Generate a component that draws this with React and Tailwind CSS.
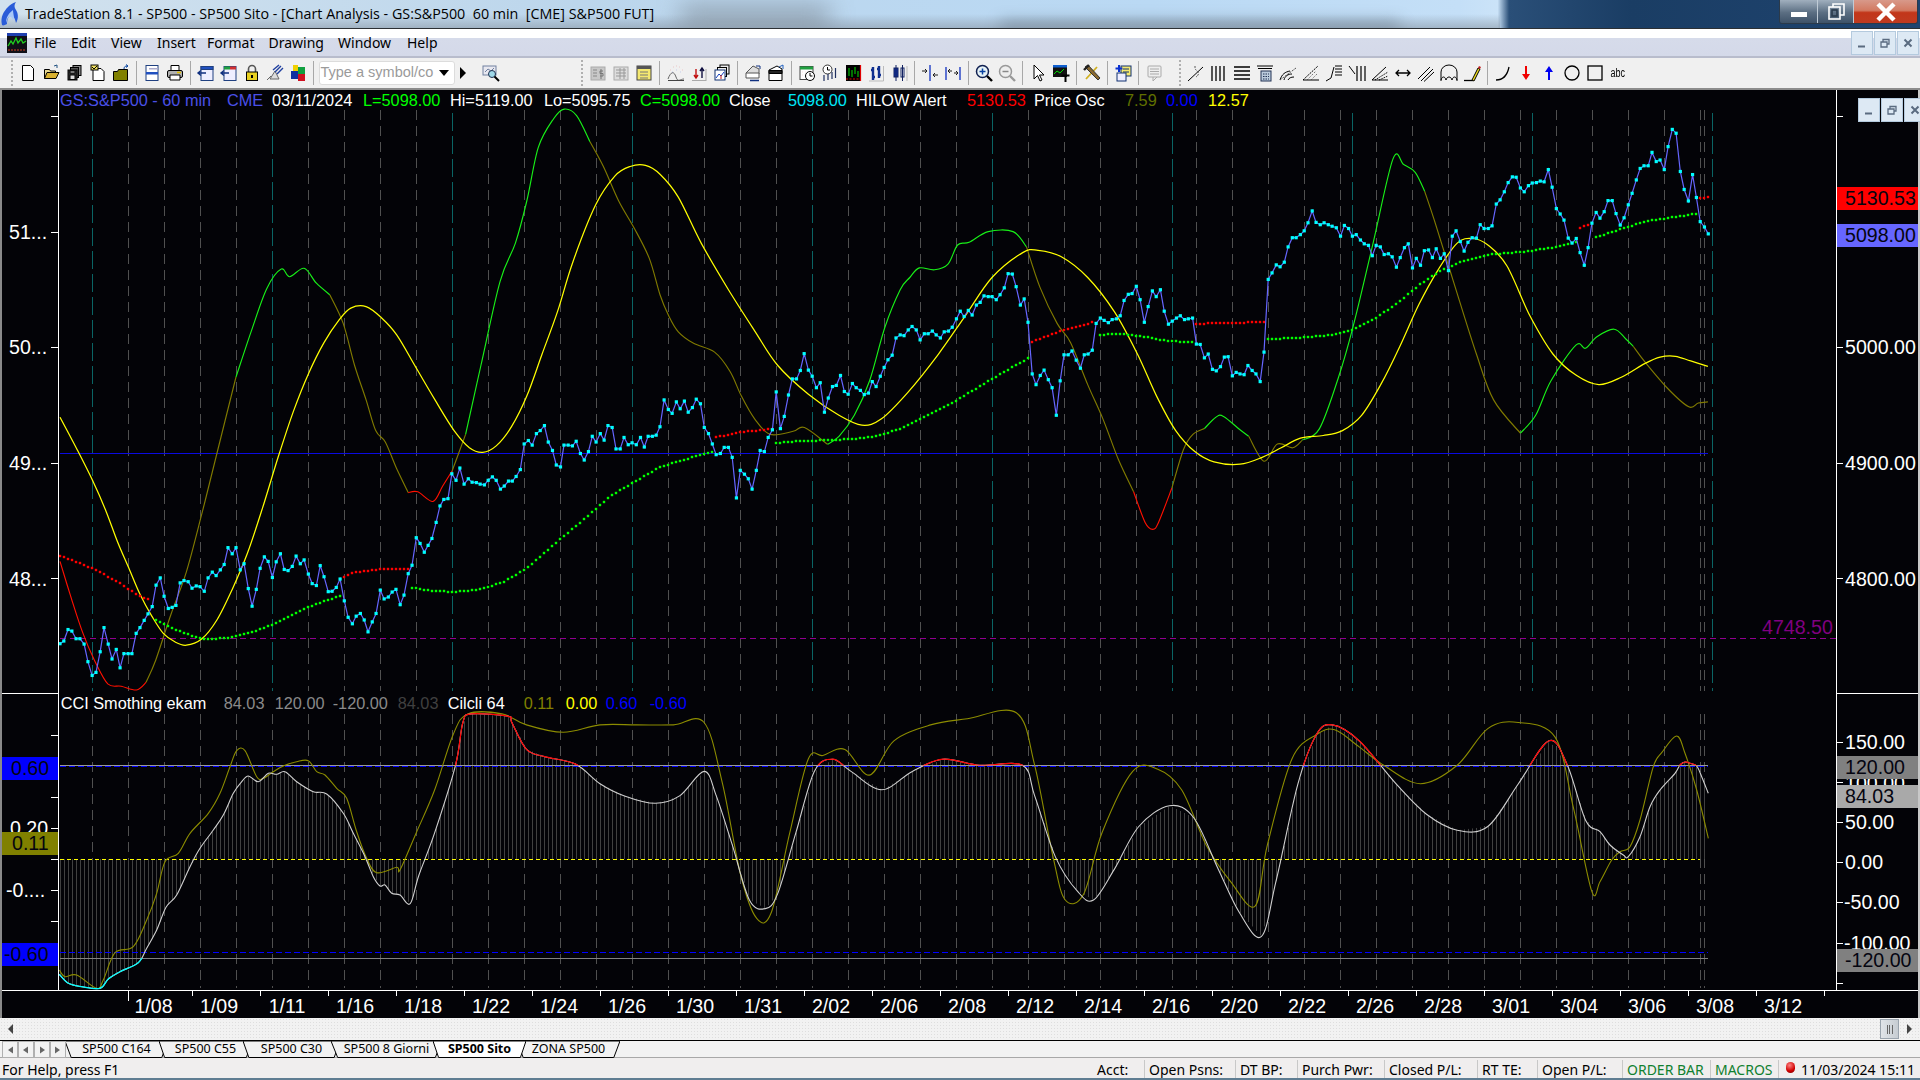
import React from "react";

const K = 600 / 1568;
const Z = (ox) => (pts) => pts.map(([x, y]) => [ox + x * K, 90 + y * K]);
const A = Z(60), B = Z(640), C = Z(1220);
const O = (pts) => pts.map(([x, y]) => [x * 1.2245, y * 1.2245]);
const Z7 = (pts) => pts.map(([x, y]) => [x / 3, 680 + y / 3]);
const Z8 = (pts) => pts.map(([x, y]) => [1600 + x / 3, 680 + y / 3]);

const price = [
  ...A([[0,1447],[10,1440],[21,1410],[31,1414],[42,1434],[52,1434],[63,1448],[73,1494],[84,1530],[94,1522],[105,1468],[115,1405],[126,1448],[136,1487],[147,1462],[157,1510],[167,1473],[178,1473],[188,1473],[199,1420],[209,1405],[220,1386],[230,1369],[241,1350],[251,1294],[262,1275],[272,1323],[283,1355],[293,1352],[303,1347],[314,1288],[324,1282],[335,1285],[345,1302],[356,1296],[366,1298],[377,1310],[387,1275],[398,1260],[408,1269],[419,1254],[429,1240],[439,1196],[450,1212],[460,1196],[471,1254],[481,1238],[492,1303],[502,1349],[513,1305],[523,1250],[534,1220],[544,1232],[555,1274],[565,1233],[576,1212],[586,1253],[596,1256],[607,1245],[617,1218],[628,1238],[638,1228],[649,1265],[659,1290],[670,1295],[680,1243],[690,1272],[701,1311],[711,1310],[722,1300],[732,1278],[743,1335],[753,1378],[764,1395],[774,1375],[785,1368],[795,1385],[805,1416],[816,1390],[826,1368],[837,1307],[847,1330],[858,1325],[868,1312],[878,1305],[889,1345],[899,1320],[910,1264],[920,1242],[931,1170],[941,1185],[952,1208],[962,1190],[972,1172],[983,1130],[993,1087],[1003,1070],[1014,1068],[1024,1003],[1035,1020],[1045,988],[1056,1030],[1067,1016],[1077,1025],[1088,1026],[1098,1030],[1109,1032],[1119,1020],[1130,1011],[1140,1020],[1151,1043],[1161,1035],[1172,1022],[1182,1022],[1192,1010],[1203,992],[1213,925],[1224,916],[1234,928],[1245,898],[1255,890],[1266,877],[1276,920],[1287,942],[1297,980],[1308,985],[1317,928],[1328,928],[1339,930],[1349,918],[1360,950],[1370,967],[1381,945],[1391,905],[1401,920],[1412,898],[1422,915],[1432,877],[1443,882],[1453,938],[1464,938],[1474,908],[1485,927],[1495,922],[1506,927],[1517,908],[1527,933],[1537,905],[1548,905],[1558,902],[1568,880]]),
  ...B([[63,810],[74,835],[84,845],[95,815],[105,833],[116,813],[126,842],[137,830],[147,808],[158,820],[168,882],[179,898],[189,925],[199,953],[210,950],[220,934],[231,934],[241,960],[252,1066],[262,994],[273,1004],[283,1016],[293,1043],[304,994],[314,942],[325,945],[335,908],[346,888],[356,789],[367,885],[377,853],[388,797],[398,755],[409,755],[419,733],[429,689],[440,732],[450,748],[461,778],[471,765],[482,842],[492,805],[503,775],[513,772],[524,746],[534,788],[544,795],[555,767],[565,778],[576,785],[586,796],[597,792],[607,762],[617,775],[628,748],[638,725],[648,705],[659,693],[669,648],[680,640],[690,642],[701,627],[711,618],[722,627],[732,653],[743,637],[753,637],[764,630],[774,640],[785,648],[795,632],[806,630],[816,620],[827,598],[837,578],[847,592],[858,576],[868,588],[879,562],[889,555],[899,538],[910,540],[920,540],[931,548],[941,535],[952,517],[962,480],[973,481],[983,514],[994,562],[1004,546],[1014,607],[1025,742],[1035,770],[1046,746],[1056,732],[1067,757],[1077,778],[1088,850],[1098,760],[1108,692],[1119,692],[1129,682],[1140,706],[1151,727],[1161,692],[1171,690],[1182,680],[1192,610],[1203,596],[1213,602],[1224,608],[1234,600],[1245,598],[1255,590],[1265,550],[1276,534],[1286,532],[1297,513],[1307,548],[1318,607],[1328,566],[1339,525],[1349,540],[1360,522],[1370,578],[1381,612],[1391,604],[1402,596],[1412,590],[1423,600],[1433,598],[1444,596],[1454,664],[1464,665],[1475,700],[1485,690],[1496,730],[1506,734],[1517,723],[1527,698],[1537,697],[1548,747],[1558,738],[1568,742]]),
  ...C([[63,744],[73,720],[84,733],[94,742],[105,762],[115,685],[126,495],[136,478],[147,457],[157,462],[168,450],[178,410],[189,386],[199,386],[210,378],[220,368],[230,347],[241,316],[251,346],[262,352],[272,347],[283,352],[293,356],[304,360],[315,382],[325,354],[336,362],[346,382],[356,378],[367,392],[377,402],[388,406],[398,433],[408,406],[419,410],[429,430],[440,428],[450,436],[461,463],[471,438],[482,412],[492,402],[503,465],[513,440],[524,458],[534,420],[545,418],[555,438],[565,415],[576,440],[586,428],[597,472],[607,382],[617,368],[628,396],[638,421],[648,398],[659,386],[670,387],[680,352],[690,362],[701,362],[711,355],[722,298],[732,287],[743,266],[753,242],[764,227],[774,228],[785,256],[795,266],[806,250],[816,243],[827,242],[837,238],[847,240],[858,208],[868,254],[879,310],[889,324],[899,340],[910,387],[920,400],[931,388],[941,425],[952,458],[962,412],[972,348],[983,320],[993,335],[1004,318],[1014,289],[1025,289],[1035,323],[1046,353],[1056,334],[1067,300],[1077,270],[1088,235],[1098,205],[1108,198],[1119,198],[1129,163],[1140,187],[1150,183],[1161,208],[1171,148],[1182,103],[1192,113],[1203,213],[1213,260],[1224,290],[1235,221],[1245,281],[1255,344],[1266,358],[1276,376]]),
];

const red = "#ff0000", green = "#00ff00";
const dotted = [
  [red, A([[0,1218],[50,1235],[100,1258],[150,1285],[200,1318],[240,1336]])],
  [green, A([[245,1382],[290,1405],[340,1425],[380,1435],[440,1432],[500,1418],[560,1395],[640,1355],[735,1320]])],
  [red, A([[738,1276],[770,1260],[820,1254],[860,1251],[910,1253]])],
  [green, [...A([[918,1301],[970,1308],[1030,1312],[1100,1305],[1160,1285],[1220,1250],[1300,1180],[1360,1130],[1440,1060],[1500,1025],[1568,985]]), ...B([[130,962],[190,945]])]],
  [red, B([[195,908],[260,895],[345,885]])],
  [green, B([[355,922],[430,917],[500,915],[560,912],[620,905],[680,885],[730,860],[820,815],[920,755],[1016,700]])],
  [red, B([[1020,660],[1100,630],[1190,605]])],
  [green, B([[1200,640],[1260,637],[1320,645],[1380,656],[1450,660]])],
  [red, [...B([[1450,612],[1520,608]]), ...C([[60,608],[120,606]])]],
  [green, C([[125,651],[200,648],[290,640],[350,625],[400,600],[460,560],[520,510],[580,470],[640,445],[700,430],[800,422],[870,412],[935,397]])],
  [red, C([[940,360],[970,350]])],
  [green, C([[975,388],[1050,362],[1120,342],[1200,330],[1250,323]])],
  [red, C([[1253,283],[1278,279]])],
];

const yellow = [
  ...A([[0,855],[45,940],[85,1020],[120,1100],[150,1180],[180,1250],[210,1320],[240,1375],[270,1420],[300,1442],[330,1451],[370,1435],[410,1385],[450,1305],[490,1210],[530,1090],[570,960],[610,840],[650,740],[690,660],[730,600],[760,570],[800,566],[840,595],[880,640],[930,725],[980,810],[1030,890],[1070,935],[1105,947],[1140,930],[1180,880],[1220,800],[1260,690],[1300,580],[1340,450],[1400,300],[1450,225],[1490,200],[1530,197],[1568,220]]),
  ...B([[100,280],[160,400],[230,520],[300,630],[360,720],[440,795],[520,850],[580,876],[630,860],[700,790],[780,690],[850,590],[920,490],[1000,425],[1040,419],[1100,435],[1170,490],[1240,580],[1300,690],[1350,800],[1400,890],[1450,945],[1500,972],[1568,978]]),
  ...C([[110,960],[160,935],[210,910],[270,903],[320,890],[370,850],[420,770],[470,670],[520,560],[570,470],[620,400],[660,388],[700,405],[750,460],[810,590],[870,690],[930,745],[990,770],[1050,750],[1110,715],[1150,698],[1190,696],[1230,708],[1275,722]]),
];

const OL = "#807a00", GR = "#18f018", RD = "#ff1000";
const osc = [
  [RD, A([[0,1232],[30,1330],[60,1420],[90,1490],[125,1552],[160,1558],[200,1568],[225,1548]])],
  [OL, A([[225,1548],[250,1490],[290,1370],[330,1260],[370,1110],[410,950],[460,750]])],
  [GR, A([[460,750],[500,630],[540,520],[578,468],[600,488],[638,466],[670,505],[705,535]])],
  [OL, A([[705,535],[740,610],[770,720],[800,810],[825,890],[850,920],[880,990],[910,1052]])],
  [RD, A([[910,1052],[935,1050],[975,1075],[1000,1035],[1025,995]])],
  [OL, A([[1025,995],[1060,900]])],
  [GR, A([[1060,900],[1100,720],[1150,500],[1190,400],[1220,290],[1250,150],[1290,75],[1318,50],[1350,67],[1385,135]])],
  [OL, [...A([[1385,135],[1420,200],[1460,290],[1500,360],[1540,440],[1568,535]]), ...B([[75,590],[100,632],[140,662],[195,685],[235,735],[265,800],[300,860],[340,900],[400,892],[430,882],[490,926]])]],
  [GR, B([[490,926],[520,905],[560,850],[600,760],[640,620],[680,522],[705,490],[730,465],[770,470],[805,455],[830,405],[860,398],[910,370],[975,370],[1010,410]])],
  [OL, B([[1010,410],[1045,515],[1090,610],[1125,660],[1170,770],[1210,860],[1250,965],[1290,1050]])],
  [RD, B([[1290,1050],[1320,1130],[1340,1148],[1355,1130],[1390,1040]])],
  [OL, B([[1390,1040],[1420,940],[1445,900],[1475,885]])],
  [GR, B([[1475,885],[1505,855],[1525,853],[1568,888]]).concat(C([[75,905]]))],
  [OL, C([[75,905],[115,970],[150,925],[190,935],[215,915]])],
  [GR, C([[215,915],[260,885],[310,750],[350,610],[400,400],[452,180],[480,195],[510,215],[535,265]])],
  [OL, C([[535,265],[560,340],[610,500],[670,690],[715,810],[785,897]])],
  [GR, C([[785,897],[825,850],[865,760],[930,667],[955,675],[985,645],[1030,625],[1060,650],[1080,670]])],
  [OL, C([[1080,670],[1110,710],[1170,780],[1225,828],[1250,818],[1275,815]])],
];

const white = [
  ...Z7([[178,883],[205,910],[245,920],[300,925],[325,897],[360,875],[415,848],[440,805],[470,750],[498,682],[530,645],[570,560],[600,505],[640,450],[670,405],[700,340],[725,305],[745,288],[775,305],[805,280],[830,283],[855,275],[890,305],[940,335],[980,342],[1030,400],[1060,460],[1095,530],[1120,590],[1140,618],[1155,615],[1175,640],[1200,645]]),
  ...O([[335,738],[342,715],[355,680],[372,625],[378,590],[385,583],[415,585],[418,590],[430,612],[445,618],[470,624],[490,640],[510,650],[535,656],[555,650],[575,630],[585,650],[598,690],[612,735],[625,742],[635,730],[650,680],[665,630],[680,620],[695,630],[720,645],[745,630],[770,620],[800,625],[835,625],[845,650],[862,700],[880,728],[893,735],[910,710],[930,675],[955,658],[975,668],[995,710],[1012,745],[1030,765],[1042,720],[1060,640],[1075,600],[1088,592],[1110,605],[1140,640],[1165,665],[1190,678],[1215,675],[1240,640],[1265,605],[1280,625],[1295,670]]),
  ...Z8([[0,455],[30,495],[70,525],[85,530],[120,470],[150,380],[180,330],[225,280],[240,255],[255,246],[270,250],[290,258],[305,290],[325,340]]),
];
const olive = [
  ...Z7([[178,870],[195,890],[230,885],[290,925],[310,900],[345,818],[400,800],[440,720],[470,640],[495,545],[535,520],[570,460],[625,400],[660,340],[690,260],[710,212],[735,212],[770,290],[790,295],[820,275],[850,258],[890,245],[925,242],[950,275],[975,285],[1010,325],[1040,355],[1070,455],[1100,535],[1130,578],[1190,562],[1200,570]]),
  ...O([[340,680],[355,645],[370,600],[382,583],[410,583],[430,592],[460,598],[490,592],[520,592],[550,592],[575,590],[590,640],[605,715],[618,750],[630,745],[645,680],[660,620],[672,617],[690,612],[710,633],[730,605],[760,592],[790,587],[830,582],[845,625],[860,700],[870,735],[885,730],[900,680],[925,630],[945,628],[965,645],[985,690],[1005,720],[1025,740],[1035,690],[1055,620],[1075,600],[1090,596],[1110,610],[1130,625],[1160,640],[1190,625],[1215,595],[1240,590],[1270,602],[1285,660],[1300,728]]),
  ...Z8([[0,605],[35,540],[60,515],[90,500],[120,420],[160,260],[185,218],[230,168],[255,220],[290,330],[325,475]]),
];

const poly = (p) => p.map(([x, y]) => `${x.toFixed(1)},${y.toFixed(1)}`).join(" ");
const smooth = (p) => {
  let d = `M${p[0][0].toFixed(1)} ${p[0][1].toFixed(1)}`;
  for (let i = 0; i < p.length - 1; i++) {
    const a = p[Math.max(i - 1, 0)], b = p[i], c = p[i + 1], e = p[Math.min(i + 2, p.length - 1)];
    d += `C${(b[0] + (c[0] - a[0]) / 6).toFixed(1)} ${(b[1] + (c[1] - a[1]) / 6).toFixed(1)} ${(c[0] - (e[0] - b[0]) / 6).toFixed(1)} ${(c[1] - (e[1] - b[1]) / 6).toFixed(1)} ${c[0].toFixed(1)} ${c[1].toFixed(1)}`;
  }
  return d;
};
const yAt = (p, x) => {
  for (let i = 0; i < p.length - 1; i++) {
    if (x >= p[i][0] && x <= p[i + 1][0]) {
      const t = (x - p[i][0]) / (p[i + 1][0] - p[i][0] || 1);
      return p[i][1] + t * (p[i + 1][1] - p[i][1]);
    }
  }
  return null;
};
const dotsOf = (p) => {
  const out = [];
  for (let x = Math.ceil(p[0][0] / 4) * 4; x <= p[p.length - 1][0]; x += 4) {
    const y = yAt(p, x);
    if (y != null) out.push([x, y]);
  }
  return out;
};
const crisp = (x) => Math.floor(x) + 0.5;

const grayX = [128.9,164.5,200.5,236.4,308.4,344.3,380.7,416.7,488.6,524.6,560.6,596.5,668.3,704.3,740.6,776.2,848.6,884.5,920.5,956.5,1028.4,1064.5,1100.4,1136.7,1196.8,1232.5,1268.5,1304.6,1340.5,1376.5,1412.5,1448.5,1484.4,1520.4,1556.8,1592.4,1628.3,1664.3,1700.3,1704];
const tealX = [92.5,272.4,452.3,632.5,812.2,992.5,1172.3,1352.8,1532.3,1712.5];
const subTealGray = [92.5,272.4,452.3,632.5,812.2,992.5,1172.3];
const dateTicks = Array.from({ length: 25 }, (_, i) => 192 + 68 * i);
const dates = ["1/09","1/11","1/16","1/18","1/22","1/24","1/26","1/30","1/31","2/02","2/06","2/08","2/12","2/14","2/16","2/20","2/22","2/26","2/28","3/01","3/04","3/06","3/08","3/12"];

function Chart() {
  const bars = [];
  for (let x = 60; x <= 1706; x += 4) {
    const y = yAt(white, x);
    if (y != null) bars.push(<line key={x} x1={x + 0.5} x2={x + 0.5} y1={859} y2={y} stroke="#404040" strokeWidth="1" />);
  }
  const whitePath = smooth(white);
  return (
    <svg className="absolute left-0 top-0 font-['Liberation_Sans',sans-serif]" width="1920" height="928" viewBox="0 90 1920 928">
      <defs>
        <clipPath id="above"><rect x="0" y="700" width="1920" height="65.5" /></clipPath>
        <clipPath id="below"><rect x="0" y="958" width="1920" height="32" /></clipPath>
      </defs>
      {grayX.map((x) => (
        <g key={x}>
          <line x1={crisp(x)} x2={crisp(x)} y1="110" y2="691" stroke="#505050" strokeWidth="1" strokeDasharray="10 6" />
          <line x1={crisp(x)} x2={crisp(x)} y1="714" y2="988" stroke="#505050" strokeWidth="1" strokeDasharray="10 6" />
        </g>
      ))}
      {subTealGray.map((x) => (
        <line key={x} x1={crisp(x)} x2={crisp(x)} y1="714" y2="988" stroke="#505050" strokeWidth="1" strokeDasharray="10 6" />
      ))}
      {tealX.map((x) => (
        <line key={x} x1={crisp(x)} x2={crisp(x)} y1="113" y2="691" stroke="#0a6464" strokeWidth="1" strokeDasharray="18 5" />
      ))}
      <line x1="60" x2="1708" y1="453.5" y2="453.5" stroke="#0a0ae0" strokeWidth="1" />
      <line x1="60" x2="1836" y1="638.5" y2="638.5" stroke="#900090" strokeWidth="1" strokeDasharray="6 4" />
      {osc.map(([c, p], i) => (
        <path key={i} d={smooth(p)} fill="none" stroke={c} strokeWidth="1.15" />
      ))}
      <path d={smooth(yellow)} fill="none" stroke="#ffff00" strokeWidth="1.25" />
      {dotted.map(([c, p], i) =>
        dotsOf(p).map(([x, y]) => <rect key={i + "-" + x} x={x - 1.2} y={Math.round(y) - 1.2} width="2.4" height="2.4" fill={c} />)
      )}
      <polyline points={poly(price)} fill="none" stroke="#6666ff" strokeWidth="1.2" />
      {price.map(([x, y], i) => (
        <rect key={i} x={x - 1.6} y={y - 1.6} width="3.2" height="3.2" fill="#00ffff" />
      ))}

      {bars}
      <line x1="60" x2="1708" y1="765.5" y2="765.5" stroke="#9a9a9a" strokeWidth="1" />
      <line x1="60" x2="1708" y1="766.5" y2="766.5" stroke="#0000ff" strokeWidth="1" strokeDasharray="6 3" />
      <line x1="60" x2="1700" y1="859.5" y2="859.5" stroke="#ffff00" strokeWidth="1" strokeDasharray="4 3" />
      <line x1="60" x2="1708" y1="952.5" y2="952.5" stroke="#0000ff" strokeWidth="1" strokeDasharray="6 3" />
      <line x1="60" x2="1708" y1="958.5" y2="958.5" stroke="#808080" strokeWidth="1" />
      <path d={smooth(olive)} fill="none" stroke="#8c8c00" strokeWidth="1.1" />
      <path d={whitePath} fill="none" stroke="#d0d0d0" strokeWidth="1.1" />
      <path d={whitePath} fill="none" stroke="#ff0000" strokeWidth="1.2" clipPath="url(#above)" />
      <path d={whitePath} fill="none" stroke="#00ffff" strokeWidth="1.2" clipPath="url(#below)" />

      {/* axes */}
      <line x1="58.5" x2="58.5" y1="90" y2="990" stroke="#fff" strokeWidth="1" />
      <line x1="1836.5" x2="1836.5" y1="90" y2="990" stroke="#fff" strokeWidth="1" />
      <line x1="2" x2="58" y1="693.5" y2="693.5" stroke="#fff" strokeWidth="1" />
      <line x1="1836" x2="1918" y1="693.5" y2="693.5" stroke="#fff" strokeWidth="1" />
      <line x1="2" x2="1918" y1="990.5" y2="990.5" stroke="#fff" strokeWidth="1" />
      {[116,232,347,463,578,735,766,797,828,859,890,921,953].map((y) => (
        <line key={y} x1="51" x2="58" y1={y + 0.5} y2={y + 0.5} stroke="#fff" strokeWidth="1" />
      ))}
      {[116,232,347,463,578,742,782,822,862,902,943,983].map((y) => (
        <line key={y} x1="1837" x2="1843" y1={y + 0.5} y2={y + 0.5} stroke="#fff" strokeWidth="1" />
      ))}
      <line x1="128.5" x2="128.5" y1="991" y2="1001" stroke="#fff" strokeWidth="1" />
      {dateTicks.map((x) => (
        <line key={x} x1={x + 0.5} x2={x + 0.5} y1="991" y2="996" stroke="#fff" strokeWidth="1" />
      ))}
      <g fill="#ffffff" fontSize="19.6">
        {[["51...",239],["50...",354],["49...",470],["48...",586],["0.20",835],["-0....",897]].map(([t, y]) => (
          <text key={t} x={t === "0.20" ? 10 : t === "-0...." ? 6 : 9} y={y}>{t}</text>
        ))}
        {[["5000.00",354],["4900.00",470],["4800.00",586],["150.00",749],["100.00",790],["50.00",829],["0.00",869],["-50.00",909],["-100.00",950]].map(([t, y]) => (
          <text key={t} x={t[0] === "-" ? 1844 : 1845} y={y}>{t}</text>
        ))}
        <text x="1762" y="634" fill="#800080">4748.50</text>
      </g>
    </svg>
  );
}

const Badge = ({ cls, children }) => (
  <div className={"absolute flex items-center h-[23px] text-[19.6px] text-[#050510] " + cls}>{children}</div>
);

function Legends() {
  return (
    <>
      <div className="absolute left-[60px] top-[1px] h-[19px] flex items-center text-[16.3px] whitespace-nowrap">
        <span className="w-[167px] text-[#4a50e8]">GS:S&amp;P500 - 60 min</span>
        <span className="w-[45px] text-[#4a50e8]">CME</span>
        <span className="w-[91px] text-white">03/11/2024</span>
        <span className="w-[87px] text-[#00ff00]">L=5098.00</span>
        <span className="w-[94px] text-white">Hi=5119.00</span>
        <span className="w-[96px] text-white">Lo=5095.75</span>
        <span className="w-[89px] text-[#00ff00]">C=5098.00</span>
        <span className="w-[59px] text-white">Close</span>
        <span className="w-[68px] text-[#00e8f8]">5098.00</span>
        <span className="w-[111px] text-white">HILOW Alert</span>
        <span className="w-[67px] text-[#ff0000]">5130.53</span>
        <span className="w-[91px] text-white">Price Osc</span>
        <span className="w-[41px] text-[#607000]">7.59</span>
        <span className="w-[42px] text-[#0000ff]">0.00</span>
        <span className="text-[#ffff00]">12.57</span>
      </div>
      <div className="absolute left-[60.7px] top-[603.5px] h-[19px] flex items-center text-[16.3px] whitespace-nowrap">
        <span className="w-[163px] text-white">CCI Smothing ekam</span>
        <span className="w-[51px] text-[#8a8a8a]">84.03</span>
        <span className="w-[58px] text-[#8a8a8a]">120.00</span>
        <span className="w-[65px] text-[#8a8a8a]">-120.00</span>
        <span className="w-[50px] text-[#404040]">84.03</span>
        <span className="w-[76px] text-white">Cilcli 64</span>
        <span className="w-[42px] text-[#808000]">0.11</span>
        <span className="w-[40px] text-[#ffff00]">0.00</span>
        <span className="w-[44px] text-[#0000ff]">0.60</span>
        <span className="text-[#0000ff]">-0.60</span>
      </div>
    </>
  );
}

/* ---------- toolbar icons ---------- */
const G = ({ children }) => (
  <svg width="20" height="20" viewBox="0 0 20 20" className="block" fill="none" stroke="#000" strokeWidth="1">{children}</svg>
);
const ic = {
  newDoc: <G><path d="M4.5 2.5h8l3 3v12h-11z" fill="#fff" /></G>,
  open: <G><path d="M2.5 15.5v-9h5l1 1.5h5v2" fill="#e8d890" /><path d="M2.5 15.5l2.5-6h12l-3 6z" fill="#d8b030" /><path d="M12 3l3-1v3" stroke="#205080" /></G>,
  saveAll: <G><rect x="8" y="2.5" width="8" height="10" fill="#888" /><rect x="5.5" y="4.5" width="8" height="10" fill="#555" /><rect x="3" y="7" width="9" height="10" fill="#333" /><rect x="5" y="12" width="5" height="4.5" fill="#ddd" /><rect x="5" y="8" width="5" height="2" fill="#eee" /></G>,
  docCheck: <G><path d="M5 5.5h8l3 3v9H5z" fill="#fff" /><rect x="3" y="2" width="7" height="5" fill="#f0e060" /><path d="M4 4l2 2 3-3" /></G>,
  oliveFolder: <G><path d="M2.5 8.5h4l1-2h9v11h-14z" fill="#808000" /><path d="M13 6c0-2 1-3 3-3M15 1.5L17 3l-2 1.5" stroke="#0040a0" /></G>,
  blueDoc: <G><rect x="4" y="2.5" width="12" height="15" fill="#fff" stroke="#204080" /><rect x="4" y="9" width="12" height="2.5" fill="#2050c0" stroke="none" /><rect x="7" y="5" width="9" height="1.5" fill="#aac" stroke="none" /></G>,
  printer: <G><path d="M6 2.5h8v5H6z" fill="#fff" /><rect x="2.5" y="7.5" width="15" height="7" rx="1.5" fill="#b0b0b0" /><path d="M5 12h10v5H5z" fill="#fff" /><path d="M12 9.5h4" stroke="#e0c000" strokeWidth="1.5" /></G>,
  winBack: <G><rect x="5" y="3.5" width="12" height="14" fill="#eef" stroke="#204080" /><rect x="5" y="3.5" width="12" height="3" fill="#2050c0" stroke="#204080" /><path d="M10 10H2M5 7.5L2 10l3 2.5" stroke="#103080" strokeWidth="1.4" /></G>,
  winBack2: <G><rect x="5" y="3.5" width="12" height="14" fill="#eef" stroke="#204080" /><rect x="5" y="3.5" width="6" height="3" fill="#20a040" stroke="none" /><rect x="11" y="3.5" width="6" height="3" fill="#d03030" stroke="none" /><path d="M10 10H2M5 7.5L2 10l3 2.5" stroke="#103080" strokeWidth="1.4" /></G>,
  lock: <G><path d="M6.5 9V6a3.5 3.5 0 0 1 7 0v3" stroke="#555" strokeWidth="1.6" /><rect x="4.5" y="9" width="11" height="8.5" fill="#e8d020" /><rect x="9" y="12" width="2" height="3" fill="#000" stroke="none" /></G>,
  sat: <G><path d="M5 16l5-8 4 8z" fill="#ddd" stroke="#666" /><path d="M10 9l6-6M8 7l6-5M12 11l6-6" stroke="#2040a0" strokeWidth="1.4" /><path d="M2 17l4-4" stroke="#666" /></G>,
  cubes: <G><rect x="3" y="8" width="7" height="8" fill="#1030a0" stroke="none" /><rect x="10" y="4" width="7" height="7" fill="#10a040" stroke="none" /><rect x="10" y="11" width="7" height="7" fill="#d01020" stroke="none" /><rect x="5" y="2" width="5" height="6" fill="#f0d000" stroke="none" /></G>,
  lens: <G><rect x="2" y="3" width="13" height="9" fill="#e8e8f0" stroke="#7080a0" /><path d="M4 9l3-3 3 2 3-3" stroke="#7080a0" /><circle cx="11" cy="11" r="3.5" fill="#9fd8e8" stroke="#203050" /><path d="M13.5 13.5L18 18" strokeWidth="2" /></G>,
  gDollar: <G><rect x="3" y="4" width="14" height="13" fill="#c8c8c8" stroke="#aaa" /><path d="M5 7h4M5 10h4M5 13h4" stroke="#888" /><path d="M13 6v10M15 8h-3v2.500h3V13h-3" stroke="#777" /></G>,
  gCalc: <G><rect x="3" y="4" width="14" height="13" fill="#ddd" stroke="#aaa" /><path d="M5 7h10M5 10h10M5 13h10M9 5v11M13 5v11" stroke="#999" /></G>,
  gSheet: <G><rect x="3" y="3" width="14" height="14" fill="#f4e870" stroke="#444" /><rect x="3" y="3" width="14" height="3" fill="#555" stroke="none" /><path d="M6 9h8M6 12h8M6 15h8" stroke="#777" /></G>,
  wave: <G><path d="M2 16c3-8 6-8 8-2s4 2 8 2" stroke="#666" /><path d="M2 17.500h16" stroke="#444" /><path d="M4 7h.1M7 4h.1M10 3h.1M13 4h.1M16 7h.1" stroke="#d02020" strokeWidth="2" /><path d="M6 9h.1M10 7h.1M14 9h.1" stroke="#2040d0" strokeWidth="2" /></G>,
  upDown: <G><path d="M7 6v9M5 12l2 3 2-3" stroke="#c01010" strokeWidth="1.4" /><path d="M13 15V5M11 8l2-3 2 3" stroke="#101040" strokeWidth="1.4" /><path d="M3 17.500h14M17 6v12" stroke="#aaa" /></G>,
  stack: <G><rect x="8" y="2" width="9" height="9" fill="#eee" /><rect x="5.500" y="4.500" width="9" height="9" fill="#eee" /><rect x="3" y="7" width="10" height="10" fill="#fff" stroke="#103070" /><path d="M4 15l3-4 2 2 3-4" stroke="#1040c0" /><path d="M9 16v-4" stroke="#c01010" /></G>,
  docChart: <G><path d="M3 10l7-7 6 3v5" fill="#ddd" stroke="#555" /><path d="M3 10h13v5H3z" fill="#fff" stroke="#555" /><path d="M7 17.500h9" stroke="#103080" strokeWidth="1.500" /><path d="M13 3h4v3" stroke="#103080" /></G>,
  docFolder: <G><path d="M3 17.500V7l8-4 5 3v11.500z" fill="#fff" /><path d="M3 7.500h13v3H3z" fill="#222" /><path d="M13 4l4-2v4" stroke="#2060c0" /></G>,
  calClock: <G><rect x="3" y="3.500" width="13" height="13" fill="#fff" stroke="#444" /><rect x="3" y="3.500" width="13" height="3" fill="#20a040" stroke="none" /><path d="M5 9h.1M8 9h.1M5 12h.1" stroke="#d02020" strokeWidth="1.500" /><circle cx="13" cy="13" r="4.500" fill="#fff" /><path d="M13 10v3h2.500" /></G>,
  clockBars: <G><circle cx="7.500" cy="6.500" r="4.500" fill="#fff" stroke="#333" /><path d="M7.500 4v3H10" /><path d="M4 12v6M8 11v6M12 9v7M15.500 5v10" stroke="#203060" strokeWidth="1.200" /></G>,
  blackChart: <G><rect x="3" y="2" width="14.500" height="16" fill="#000" stroke="none" /><path d="M6 5v8M9 7v7M12 4v7M15 8v6" stroke="#00e000" /><path d="M3 16h15" stroke="#e00000" strokeDasharray="2 1.500" /><path d="M17.500 2v16" stroke="#e00000" strokeWidth="1.200" /></G>,
  blueBars: <G><path d="M7 4v13M5 7h2M7 14h2" stroke="#103090" strokeWidth="2.400" /><path d="M13 3v12M11 6h2M13 12h2" stroke="#103090" strokeWidth="2.400" /><path d="M17.500 3v15H3" stroke="#bbb" /></G>,
  blueCandles: <G><rect x="5" y="5" width="4" height="9" fill="#1030a0" stroke="#102060" /><path d="M7 2v16" stroke="#102060" /><rect x="12" y="5" width="3" height="9" fill="#fff" stroke="#102060" /><path d="M13.500 2v16" stroke="#102060" /><path d="M18 3v15" stroke="#bbb" /></G>,
  arrowsIn: <G><path d="M10 2v16" stroke="#1030c0" strokeWidth="1.300" /><path d="M2 8h5M5 6l2 2-2 2M18 12h-5M15 10l-2 2 2 2" stroke="#202020" /></G>,
  arrowsOut: <G><path d="M3 4v13M17 4v13" stroke="#1030c0" strokeWidth="1.300" /><path d="M9 8H5M7 6L5 8l2 2M11 10h4M13 8l2 2-2 2" stroke="#202020" /></G>,
  zoomIn: <G><circle cx="8.500" cy="8.500" r="6" fill="#e6f2f6" stroke="#102050" strokeWidth="1.500" /><path d="M5.500 8.500h6M8.500 5.500v6" stroke="#0840a0" strokeWidth="1.500" /><path d="M13 13l5 5" strokeWidth="2.400" /></G>,
  zoomOut: <G><circle cx="8.500" cy="8.500" r="6" fill="#eee" stroke="#999" strokeWidth="1.500" /><path d="M5.500 8.500h6" stroke="#888" strokeWidth="1.500" /><path d="M13 13l5 5" stroke="#999" strokeWidth="2.400" /></G>,
  cursor: <G><path d="M6 2v14l3.500-3.500 2.500 5.500 2-1-2.500-5H16z" fill="#fff" /></G>,
  chartT: <G><rect x="2" y="2" width="14" height="12" fill="#111" stroke="none" /><rect x="2" y="2" width="14" height="2.500" fill="#1060d0" stroke="none" /><path d="M3 11l3-3 3 2 4-4" stroke="#00e000" /><path d="M10.500 11.500h8v2h-3V19h-2v-5.500h-3z" fill="#000" stroke="none" /></G>,
  hammer: <G><path d="M4 16L15 4" stroke="#d0b020" strokeWidth="1.800" /><path d="M3 4l3-2 12 13-2 2z" fill="#886830" stroke="#333" /><path d="M2 7l5-5" stroke="#222" strokeWidth="2.400" /></G>,
  plusSheet: <G><rect x="8" y="3" width="10" height="10" fill="#f4e870" stroke="#103070" /><path d="M10 6h6M10 9h6" stroke="#103070" /><rect x="4" y="10" width="9" height="8" fill="#eef" stroke="#103070" /><path d="M6 2v7M2.500 5.500h7" stroke="#0830d0" strokeWidth="2" /></G>,
  gNote: <G><rect x="4" y="3" width="13" height="11" rx="1" fill="#eee" stroke="#aaa" /><path d="M6 6h9M6 8.500h9M6 11h9" stroke="#aaa" /><path d="M9 14v4l4-4" stroke="#aaa" /></G>,
  cross: <G><path d="M2 18L17 4" /><path d="M9 3c0 3 0 3 2 5s2 4-1 6" strokeDasharray="2 1" stroke="#555" /></G>,
  vbars: <G><path d="M3 3v15M7 3v15M11 3v15M15 3v15" strokeWidth="1.300" /></G>,
  hbars: <G><path d="M2 4h16M2 8h16M2 12h16M2 16h16" strokeWidth="1.300" /></G>,
  calcLines: <G><path d="M2 3h16M3 5.500h14" strokeWidth="1" /><rect x="6" y="8" width="10" height="10" fill="#bcd" stroke="#235" /><path d="M8 11h6M8 13.500h6M8 16h6" stroke="#235" strokeDasharray="1.500 1" /></G>,
  arcs: <G><path d="M2 17c2-6 5-8 10-9M6 17c1-4 4-6 8-6M10 17c1-2 3-3 6-3" /><path d="M2 17L18 5" strokeDasharray="2 1" stroke="#555" /></G>,
  dotTri: <G><path d="M2 17h16" /><path d="M2 17L17 3" strokeDasharray="2 1" /><path d="M6 17L15 8M10 17L16 11" strokeDasharray="1 1.500" stroke="#444" /></G>,
  fib: <G><path d="M2 18l5-3 3-11" /><path d="M11 3h7M11 6h7M11 9h7M11 12h7" strokeWidth="1.200" /></G>,
  vfan: <G><path d="M10 3v15M14 3v15M18 3v15" strokeWidth="1.200" /><path d="M2 3l6 8" /></G>,
  angle: <G><path d="M2 17h16" /><path d="M2 17L16 4" /><path d="M5 17L18 9M9 17L18 13" strokeDasharray="1.500 1" /></G>,
  both: <G><path d="M3 10h14M6 7l-3 3 3 3M14 7l3 3-3 3" strokeWidth="1.300" /></G>,
  parallel: <G><path d="M2 16L14 4M5 18L17 6M8 18.500L18 9" strokeWidth="1" /></G>,
  arches: <G><path d="M2 18V9a8 7 0 0 1 16 0v9" /><path d="M2 17c1-4 4-4 5 0M7 17c1-4 5-4 6 0M13 17c1-4 4-4 5 0" /></G>,
  pencil: <G><path d="M2 17.500h9" strokeWidth="1.300" /><path d="M10 17l6-12 2 1-6 12z" fill="#f0e020" /><path d="M16 5l1-2 2 1-1 2z" fill="#c02020" stroke="none" /></G>,
  curve: <G><path d="M3 17c6 0 11-3 13-13" strokeWidth="1.300" /></G>,
  downRed: <G><path d="M9 3h2v8h3l-4 6-4-6h3z" fill="#f00000" stroke="none" /></G>,
  upBlue: <G><path d="M9 17h2V9h3l-4-6-4 6h3z" fill="#0000f0" stroke="none" /></G>,
  circle: <G><circle cx="10" cy="10" r="7" strokeWidth="1.300" /></G>,
  square: <G><rect x="3" y="3" width="14" height="14" strokeWidth="1.300" /></G>,
};

const Slot = ({ children }) => <div className="w-[23px] h-[24px] flex items-center justify-center shrink-0">{children}</div>;
const Sep = ({ w = "w-[8px]" }) => (
  <div className={w + " h-[24px] flex justify-center shrink-0"}><div className="w-[1px] h-full bg-[#a8a8a8]" /></div>
);
const Grip = () => (
  <div className="w-[8.5px] h-[26px] flex justify-center shrink-0"><div className="w-[2px] h-full border-l-2 border-dotted border-[#b0b0b0]" /></div>
);
const Row = ({ names }) => names.map((n) => <Slot key={n}>{ic[n]}</Slot>);

function Toolbar() {
  return (
    <div className="h-[32px] shrink-0 flex items-center pl-[8px] bg-[#f0f0f0] border-b-2 border-[#8c8c8c]">
      <Grip />
      <Row names={["newDoc"]} />
      <div className="w-[1px] shrink-0" />
      <Row names={["open", "saveAll", "docCheck", "oliveFolder"]} />
      <Sep />
      <Row names={["blueDoc", "printer"]} />
      <Sep />
      <Row names={["winBack", "winBack2", "lock", "sat", "cubes"]} />
      <Sep />
      <div className="ml-[1px] w-[136px] h-[24px] shrink-0 bg-white rounded-[3px] border border-[#dcdcdc] flex items-center pl-[1px] font-['Liberation_Sans',sans-serif] text-[14.5px] text-[#9a9a9a] whitespace-nowrap relative">
        <span>Type a symbol/co</span>
        <div className="absolute right-[5px] top-[8px] w-0 h-0 border-l-[5px] border-r-[5px] border-t-[6px] border-l-transparent border-r-transparent border-t-black" />
      </div>
      <div className="w-[16px] shrink-0 flex justify-center"><div className="w-0 h-0 border-y-[6px] border-l-[6px] border-y-transparent border-l-black" /></div>
      <div className="ml-[8.5px]"><Slot>{ic.lens}</Slot></div>
      <div className="w-[75.5px] shrink-0" />
      <Grip />
      <Row names={["gDollar", "gCalc", "gSheet"]} />
      <Sep w="w-[9.5px]" />
      <Row names={["wave", "upDown", "stack"]} />
      <Sep />
      <Row names={["docChart", "docFolder"]} />
      <Sep />
      <Row names={["calClock", "clockBars", "blackChart", "blueBars", "blueCandles"]} />
      <Sep />
      <Row names={["arrowsIn", "arrowsOut"]} />
      <Sep />
      <Row names={["zoomIn", "zoomOut"]} />
      <Sep />
      <Row names={["cursor", "chartT"]} />
      <Sep />
      <Row names={["hammer"]} />
      <Sep />
      <Row names={["plusSheet"]} />
      <Sep />
      <Row names={["gNote"]} />
      <div className="w-[10px] shrink-0" />
      <Grip />
      <Row names={["cross", "vbars", "hbars", "calcLines", "arcs", "dotTri", "fib", "vfan", "angle", "both", "parallel", "arches", "pencil"]} />
      <Sep />
      <Row names={["curve", "downRed", "upBlue", "circle", "square"]} />
      <Slot><span className="font-['Liberation_Sans',sans-serif] text-[12px] text-black scale-x-75">abc</span></Slot>
    </div>
  );
}

const MdiBtn = ({ kind }) => (
  <div className="w-[22px] h-[24px] shrink-0 bg-[#dde9f4] border border-[#b4cade] flex items-center justify-center">
    <svg width="12" height="12" viewBox="0 0 12 12" fill="none" stroke="#5a6b80" strokeWidth="1.300">
      {kind === "min" && <path d="M2 9.500h7" strokeWidth="2" />}
      {kind === "res" && <path d="M2 5h6v5H2zM4 5V2.500h6V7H8" />}
      {kind === "x" && <path d="M2.500 2.500l7 7M9.500 2.500l-7 7" strokeWidth="2" />}
    </svg>
  </div>
);

function TitleBar() {
  return (
    <div className="relative h-[28px] shrink-0 overflow-hidden bg-[linear-gradient(90deg,#d2e2ee_0%,#bcd6ec_30%,#bad9f4_60%,#c4dff7_76%,#cbe3f8_78%,#2a4f78_78.6%,#1a3d64_85%,#1f4470_100%)]">
      <div className="absolute left-0 right-[420px] top-[14px] h-[14px] bg-[linear-gradient(180deg,transparent,#8b99a8)] opacity-60" />
      <div className="absolute left-[680px] top-[6px] w-[150px] h-[22px] bg-[#7d8893] blur-md opacity-70" />
      <div className="absolute left-[1000px] top-[22px] w-[400px] h-[8px] bg-[#50606e] blur-sm opacity-60" />
      <div className="relative flex items-center h-full">
        <svg width="20" height="26" viewBox="0 0 20 26" className="ml-[0px] shrink-0">
          <path d="M2 24C0 16 4 10 8 6c2-2 4-4 8-5-2 3-2 5 0 8s3 8 0 13c-1-5-3-8-5-8-3 1-4 6-4 9-2 1-4 2-5 1z" fill="#2a5cd8" />
          <path d="M6 22c0-6 3-10 7-13 0 4 2 7 0 10-1-3-3-4-4-3-2 1-2 4-3 6z" fill="#a8c8f8" />
        </svg>
        <span className="ml-[5px] font-['Open_Sans',sans-serif] text-[14.3px] text-black whitespace-pre">TradeStation 8.1 - SP500 - SP500 Sito - [Chart Analysis - GS:S&amp;P500  60 min  [CME] S&amp;P500 FUT]</span>
      </div>
      <div className="absolute right-[2px] top-0 w-[139px] h-[24px] flex rounded-b-[3px] border border-t-0 border-[#2b3a4a] overflow-hidden">
        <div className="w-[38px] border-r border-[#c0cbd6] bg-[linear-gradient(180deg,#a0afbe,#5b6e82_55%,#3e5268)] flex items-center justify-center">
          <div className="w-[16px] h-[5px] mt-[6px] bg-white" />
        </div>
        <div className="w-[36px] border-r border-[#c0cbd6] bg-[linear-gradient(180deg,#a0afbe,#5b6e82_55%,#3e5268)] flex items-center justify-center">
          <svg width="20" height="20" viewBox="0 0 20 20" fill="none" stroke="#fff" strokeWidth="1.600"><path d="M7 5V2h11v11h-4" /><rect x="3" y="5" width="11" height="12" /><rect x="6" y="8" width="5" height="6" stroke="#2a3a4c" /></svg>
        </div>
        <div className="flex-1 bg-[linear-gradient(180deg,#d8998a,#d27a62_45%,#c2361a_55%,#bf3a20)] flex items-center justify-center">
          <svg width="22" height="20" viewBox="0 0 22 20" fill="none" stroke="#fff" strokeWidth="4.500"><path d="M3 2l16 16M19 2L3 18" /></svg>
        </div>
      </div>
    </div>
  );
}

function MenuBar() {
  const items = [["File","w-[37px]"],["Edit","w-[40px]"],["View","w-[46px]"],["Insert","w-[50px]"],["Format","w-[61.5px]"],["Drawing","w-[69.5px]"],["Window","w-[69px]"],["Help","w-[40px]"]];
  return (
    <div className="h-[30px] shrink-0 border-t border-[#2c3034] border-b-2 border-b-[#b8bccc] flex items-center bg-[linear-gradient(180deg,#ffffff_0%,#ffffff_32%,#d6dbea_34%,#d4d9e9_100%)]">
      <svg width="20" height="20" viewBox="0 0 20 20" className="ml-[7px] shrink-0">
        <rect width="20" height="20" fill="#101018" />
        <rect width="20" height="3" fill="#2040b0" />
        <path d="M1 13l3-5 2 3 3-6 2 5 3-4 2 4 3-2" fill="none" stroke="#20d020" strokeWidth="1.300" />
        <path d="M1 17h18" stroke="#d04020" strokeDasharray="2 1" />
      </svg>
      <div className="flex ml-[7px] font-['Noto_Sans',sans-serif] text-[14px] text-black">
        {items.map(([t, w]) => <span key={t} className={w}>{t}</span>)}
      </div>
      <div className="ml-auto flex mr-[1px] gap-[1px]">
        <MdiBtn kind="min" /><MdiBtn kind="res" /><MdiBtn kind="x" />
      </div>
    </div>
  );
}

const Tab = ({ w, active, children }) => (
  <div className={"relative h-[17px] shrink-0 -mr-[9px] flex items-center justify-center font-['Noto_Sans',sans-serif] text-[12.5px] text-black whitespace-nowrap " + w + (active ? " font-bold z-10" : "")}>
    <svg className="absolute inset-0 w-full h-full" preserveAspectRatio="none" viewBox="0 0 100 17">
      <polygon points="0,0 6,16.500 94,16.500 100,0" fill={active ? "#fff" : "#f2f2f2"} stroke="#000" strokeWidth="1" vectorEffect="non-scaling-stroke" />
    </svg>
    <span className="relative">{children}</span>
  </div>
);
const Nav = ({ d }) => (
  <div className="w-[16px] h-[17px] border border-[#b0b0b0] flex items-center justify-center shrink-0">
    <svg width="10" height="10" viewBox="0 0 10 10" fill="#666"><path d={d} /></svg>
  </div>
);

function Bottom() {
  const cells = [
    ["w-[91px]","Open Psns:","text-black"],
    ["w-[62px]","DT BP:","text-black"],
    ["w-[87px]","Purch Pwr:","text-black"],
    ["w-[93px]","Closed P/L:","text-black"],
    ["w-[60px]","RT TE:","text-black"],
    ["w-[85px]","Open P/L:","text-black"],
    ["w-[88px]","ORDER BAR","text-[#108030]"],
    ["w-[68px]","MACROS","text-[#108030]"],
  ];
  return (
    <>
      <div className="h-[22px] shrink-0 bg-[radial-gradient(#dedede_1px,#f2f2f2_1px)] bg-[length:3px_3px] flex items-center justify-between">
        <div className="ml-[8px] w-0 h-0 border-y-[5px] border-r-[5px] border-y-transparent border-r-[#444]" />
        <div className="flex items-center">
          <div className="w-[19px] h-[20px] bg-[linear-gradient(90deg,#e0e4e8,#c6ccd2)] border border-[#9aa4ae] flex items-center justify-center">
            <div className="w-[6px] h-[9px] border-x border-[#666] flex justify-center"><div className="w-[1px] bg-[#666]" /></div>
          </div>
          <div className="mx-[8px] w-0 h-0 border-y-[5px] border-l-[5px] border-y-transparent border-l-[#444]" />
        </div>
      </div>
      <div className="h-[18px] shrink-0 border-t border-black bg-[#f2f2f2] border-b border-b-[#a8a8a8] flex items-start">
        <div className="flex pl-[2px] relative z-20">
          <Nav d="M1.500 1.500v7M8 1.500L3 5l5 3.500z" /><Nav d="M7 1.500L2 5l5 3.500z" /><Nav d="M3 1.500L8 5 3 8.500z" /><Nav d="M8.500 1.500v7M2 1.500L7 5 2 8.500z" />
        </div>
        <div className="flex -ml-[1px]">
          <Tab w="w-[103px]">SP500 C164</Tab>
          <Tab w="w-[93px]">SP500 C55</Tab>
          <Tab w="w-[97px]">SP500 C30</Tab>
          <Tab w="w-[111px]">SP500 8 Giorni</Tab>
          <Tab w="w-[93px]" active>SP500 Sito</Tab>
          <Tab w="w-[103px]">ZONA SP500</Tab>
        </div>
      </div>
      <div className="h-[20px] shrink-0 bg-[#f0eeee] flex items-center pt-[2px] font-['Noto_Sans',sans-serif] text-[14px] text-black whitespace-nowrap">
        <span className="w-[1092px] pl-[2px] shrink-0">For Help, press F1</span>
        <span className="w-[52px] pl-[5px] shrink-0">Acct:</span>
        {cells.map(([w, t, c]) => (
          <span key={t} className={w + " pl-[4px] shrink-0 border-l border-[#c8c8c8] h-full flex items-center " + c}>{t}</span>
        ))}
        <span className="w-[23px] shrink-0 border-l border-[#c8c8c8] h-full flex items-center justify-center">
          <span className="w-[9px] h-[11px] rounded-full bg-[radial-gradient(circle_at_40%_30%,#ff8080,#d00000_60%,#700000)] -mt-[4px]" />
        </span>
        <span>11/03/2024 15:11</span>
      </div>
      <div className="h-[2px] shrink-0 bg-[#5f7d92]" />
    </>
  );
}

export default function App() {
  return (
    <div className="w-[1920px] h-[1080px] overflow-hidden flex flex-col bg-[#f0f0f0]">
      <TitleBar />
      <MenuBar />
      <Toolbar />
      <div className="relative h-[928px] shrink-0 bg-[#030307] flex flex-col font-['Liberation_Sans',sans-serif]">
        <Chart />
        <Legends />
        <div className="absolute left-0 top-0 bottom-0 w-[2px] bg-[#8a8a8a]" />
        <div className="absolute right-0 top-0 bottom-0 w-[2px] bg-[#c8c8c8]" />
        <Badge cls="left-[1837px] top-[97px] w-[81px] pl-[8px] bg-[#ff0000]">5130.53</Badge>
        <Badge cls="left-[1837px] top-[134px] w-[81px] pl-[8px] bg-[#6666ff]">5098.00</Badge>
        <Badge cls="left-[2px] top-[667px] w-[56px] pl-[9px] bg-[#0000ff]">0.60</Badge>
        <Badge cls="left-[2px] top-[742px] w-[56px] pl-[10px] bg-[#808000]">0.11</Badge>
        <Badge cls="left-[2px] top-[853px] w-[56px] pl-[2px] bg-[#0000ff]">-0.60</Badge>
        <Badge cls="left-[1837px] top-[666px] w-[81px] pl-[8px] bg-[#808080]">120.00</Badge>
        <Badge cls="left-[1837px] top-[695px] w-[81px] pl-[8px] bg-[#a9a9a9]">84.03</Badge>
        <Badge cls="left-[1837px] top-[859px] w-[81px] pl-[8px] bg-[#808080]">-120.00</Badge>
        <div className="absolute -right-[6px] top-[8px] flex gap-[1px]">
          <MdiBtn kind="min" /><MdiBtn kind="res" /><MdiBtn kind="x" />
        </div>
        <div className="relative mt-[900px] h-[28px] flex items-center pt-[6px] pl-[122px] text-[19.6px] text-white">
          <span className="w-[63px] text-center">1/08</span>
          {dates.map((d) => <span key={d} className="w-[68px] text-center shrink-0">{d}</span>)}
        </div>
      </div>
      <Bottom />
    </div>
  );
}
